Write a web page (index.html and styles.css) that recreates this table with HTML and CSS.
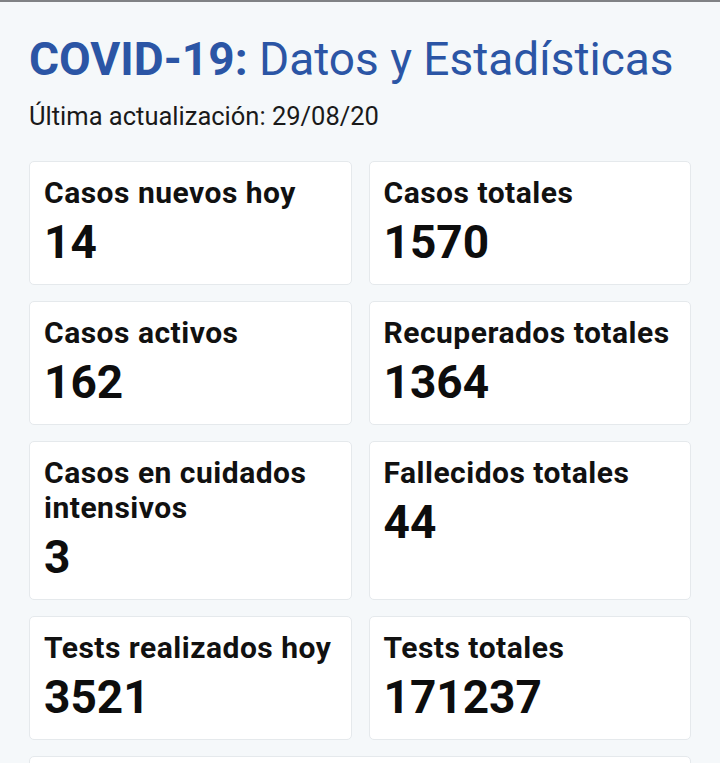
FILE: index.html
```html
<!DOCTYPE html>
<html lang="es">
<head>
<meta charset="utf-8">
<title>COVID-19: Datos y Estadísticas</title>
<link rel="stylesheet" href="styles.css">
</head>
<body>
<div class="topline"></div>
<main class="page">
  <h1 class="title"><strong>COVID-19:</strong> Datos y Estadísticas</h1>
  <p class="updated">Última actualización: 29/08/20</p>
  <section class="grid">
    <div class="card"><div class="label">Casos nuevos hoy</div><div class="value">14</div></div>
    <div class="card"><div class="label">Casos totales</div><div class="value">1570</div></div>
    <div class="card"><div class="label">Casos activos</div><div class="value">162</div></div>
    <div class="card"><div class="label">Recuperados totales</div><div class="value">1364</div></div>
    <div class="card"><div class="label">Casos en cuidados intensivos</div><div class="value">3</div></div>
    <div class="card"><div class="label">Fallecidos totales</div><div class="value">44</div></div>
    <div class="card"><div class="label">Tests realizados hoy</div><div class="value">3521</div></div>
    <div class="card"><div class="label">Tests totales</div><div class="value">171237</div></div>
    <div class="card wide"><div class="label">&nbsp;</div><div class="value">&nbsp;</div></div>
  </section>
</main>
</body>
</html>
```

FILE: styles.css
```css
html, body {
  margin: 0;
  padding: 0;
  background: #f5f8fa;
  font-family: Roboto, "Noto Sans", Arial, sans-serif;
  color: #111;
}
.topline {
  height: 2px;
  background: #808285;
}
.page {
  padding: 0 29px 0 29px;
}
.title {
  margin: 0;
  padding-top: 30px;
  font-size: 46px;
  line-height: 54px;
  font-weight: 400;
  color: #2b55a5;
  letter-spacing: 0;
}
.title strong {
  font-weight: 700;
}
.updated {
  margin: 0;
  padding-top: 15px;
  font-size: 25.5px;
  line-height: 30px;
  color: #1a1a1a;
}
.grid {
  margin-top: 30px;
  display: grid;
  grid-template-columns: 1fr 1fr;
  gap: 16px 17px;
}
.card {
  background: #fff;
  border: 1px solid #e5e9ec;
  border-radius: 5px;
  padding: 13px 14px 14px 14px;
}
.card.wide {
  grid-column: 1 / span 2;
}
.label {
  font-size: 30px;
  line-height: 35px;
  font-weight: 700;
  letter-spacing: 0.5px;
  color: #111;
}
.value {
  margin-top: 5px;
  font-size: 46px;
  line-height: 55px;
  font-weight: 700;
  color: #0d0d0d;
}
```
